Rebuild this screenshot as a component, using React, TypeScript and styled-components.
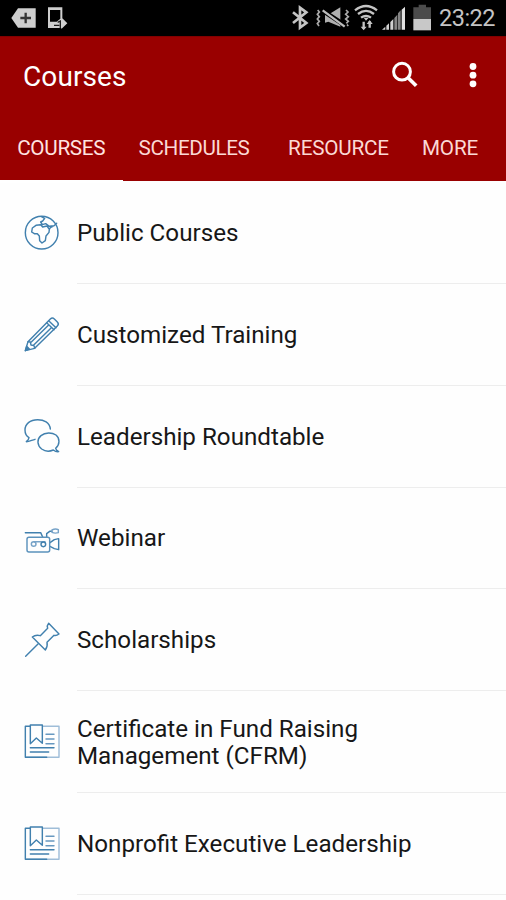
import React from 'react';
import styled, { createGlobalStyle } from 'styled-components';

const GlobalStyle = createGlobalStyle`
  * { box-sizing: border-box; }
  body { margin: 0; background: #fefefe; font-family: Roboto, sans-serif; overflow: hidden; }
`;

const Screen = styled.div`
  width: 506px;
  height: 900px;
  overflow: hidden;
  background: #fefefe;
`;

const StatusBar = styled.div`
  display: flex;
  justify-content: space-between;
  height: 36px;
  background: #000;
`;

const StatusIcons = styled.svg<{ $width: number }>`
  display: block;
  width: ${(p) => p.$width}px;
  height: 36px;
`;

const StatusRight = styled.div`
  display: flex;
  width: 226px;
`;

const Clock = styled.span`
  width: 67px;
  color: #c4c4c4;
  font-size: 23.5px;
  line-height: 37px;
  letter-spacing: -0.5px;
  white-space: nowrap;
`;

const Header = styled.header`
  height: 145.4px;
  background: #990000;
  border-top: 1px solid #820000;
`;

const Toolbar = styled.div`
  display: flex;
  align-items: center;
  height: 79px;
  padding-left: 23px;
`;

const Title = styled.h1`
  flex: 1;
  margin: 0;
  color: #fff;
  font-size: 28px;
  font-weight: 400;
  line-height: 32px;
  letter-spacing: 0.1px;
`;

const ToolbarIcons = styled.svg`
  width: 123px;
  height: 79px;
`;

const Tabs = styled.nav`
  display: grid;
  grid-template-columns: 122.5px 143px 146px 1fr;
  height: 65.4px;
`;

const Tab = styled.div<{ $active?: boolean; $align?: string; $inset?: number }>`
  display: flex;
  justify-content: ${(p) => p.$align ?? 'center'};
  padding-left: ${(p) => p.$inset ?? 0}px;
  border-bottom: ${(p) => (p.$active ? '3px solid #fff' : '0')};
  color: ${(p) => (p.$active ? '#ffe4e0' : '#fbd9d5')};
  font-size: 20.7px;
  line-height: 64px;
  white-space: nowrap;
`;

const TabLabel = styled.span<{ $spacing: number }>`
  letter-spacing: ${(p) => p.$spacing}px;
`;

const List = styled.main`
  padding-top: 0.8px;
`;

const Row = styled.div`
  display: flex;
  height: 101.8px;
  padding-left: 22px;
`;

const RowIcon = styled.svg`
  flex: none;
  width: 40px;
  height: 40px;
  margin: 30.2px 15px 0 0;
  fill: none;
  stroke: #4180ae;
  stroke-width: 4.3;
  stroke-linecap: round;
  stroke-linejoin: round;
`;

const RowBody = styled.div`
  display: flex;
  flex: 1;
  align-items: center;
  border-bottom: 1.5px solid #ededed;
  color: #171717;
  font-size: 24.2px;
  line-height: 27px;
`;

const RowLabel = styled.span`
  padding-top: 2px;
  white-space: pre-line;
`;

const Certificate = () => (
  <RowIcon viewBox="36 28 120 120">
    <g stroke="#9fbdd8">
      <path d="M98 44H147V137H50" />
      <path d="M108 68H132M108 82H132M108 96H132" stroke="#6798c0" />
    </g>
    <path d="M60 44H46V137H110M61 96V40H97V95L79 79L61 96M61 108H132M61 121H116" />
  </RowIcon>
);

const rows = [
  {
    label: 'Public Courses',
    icon: (
      <RowIcon viewBox="36 22 120 120">
        <circle cx="95" cy="84" r="49" />
        <path d="M94 36L104 41L98 49L92 52L97 60L107 57L118 65L132 63L140 56M130 64L121 69L118 74L111 64L98 67L92 60L78 62L67 70L65 82L73 87H82L88 94L89 108L96 115L106 108L108 94L117 83L118 74" />
      </RowIcon>
    ),
  },
  {
    label: 'Customized Training',
    icon: (
      <RowIcon viewBox="36 28 120 120">
        <path d="M46 138L54 111L121 43Q127 37 133 43L142 52Q148 58 142 64L74 131Z" />
        <path d="M54 111L61 112L63 121L72 123L74 131M110 54L132 75M116 48L138 69M64 112L116 61M72 120L124 69" />
        <path d="M46 138L50 125L58 133Z" fill="#4180ae" />
      </RowIcon>
    ),
  },
  {
    label: 'Leadership Roundtable',
    icon: (
      <RowIcon viewBox="36 27 120 120">
        <path d="M121 66C119 47 102 38 83 38C60 38 45 51 45 69C45 80 50 88 57 92C56 98 53 101 49 104C58 104 66 99 75 97" />
        <path d="M137 124C150 112 150 94 138 84C126 76 106 75 93 86C80 97 81 115 95 126C106 134 121 133 130 129C135 133 140 135 146 134C141 131 138 128 137 124Z" />
      </RowIcon>
    ),
  },
  {
    label: 'Webinar',
    icon: (
      <RowIcon viewBox="36 22 120 120">
        <path d="M46 66H92L98 79M110 79V69L119 62H126M120 96L133 87L146 84V117L133 114L120 107" />
        <path d="M57 80H113Q119 80 119 86V118Q119 124 113 124H57Q51 124 51 118V86Q51 80 57 80Z" stroke="#5b92bc" />
        <path d="M126 58Q136 53 145 57V66Q135 69 126 65ZM72 93H105" stroke="#77a3c8" />
        <circle cx="71" cy="100" r="7" stroke="#77a3c8" />
        <circle cx="100" cy="101" r="7" />
      </RowIcon>
    ),
  },
  {
    label: 'Scholarships',
    icon: (
      <RowIcon viewBox="36 29 120 120">
        <path d="M116 39L147 71Q139 77 132 75L111 96Q114 107 106 119L67 80Q77 72 91 76L113 54Q110 46 116 39Z" />
        <path d="M84 101L47 138" />
      </RowIcon>
    ),
  },
  { label: 'Certificate in Fund Raising\nManagement (CFRM)', icon: <Certificate /> },
  { label: 'Nonprofit Executive Leadership', icon: <Certificate /> },
];

export default function App() {
  return (
    <Screen>
      <GlobalStyle />
      <StatusBar>
        <StatusIcons $width={120} viewBox="0 0 360 108">
          <path d="M34 54L54 25H107V83H54Z" fill="#cecece" />
          <path d="M77 38V70M61 54H93" stroke="#343434" strokeWidth="7" />
          <path fillRule="evenodd" d="M144 22H187V55L202 70L184 87V84H144ZM150 30V65H170L181 56V30Z" fill="#cecece" />
          <path d="M162 76H178M173 67L181 63V85" fill="none" stroke="#1b1b1b" strokeWidth="4" />
        </StatusIcons>
        <StatusRight>
          <StatusIcons $width={159} viewBox="0 0 477 108">
            <path d="M39 37L79 69L60 83V23L79 37L39 69" fill="none" stroke="#c4c4c4" strokeWidth="8" />
            <g fill="none" stroke="#aaa" strokeWidth="5">
              <path d="M113 30L118 36L112 43L118 50L112 57L118 64L112 71L117 78M198 30L204 36L197 43L205 50L197 57L205 64L198 71L205 78" />
            </g>
            <path d="M135 39L147 43L181 22V80L145 65L135 68Z" fill="#b0b0b0" />
            <path d="M128 32L198 78" stroke="#000" strokeWidth="14" />
            <path d="M128 31L194 80" stroke="#bcbcbc" strokeWidth="7" />
            <g fill="none" stroke="#c4c4c4" strokeWidth="7">
              <path d="M225 31Q258 5 291 31M234 42Q258 23 282 42M243 53Q258 42 273 53" />
              <path d="M251 65V87M269 64V83" />
            </g>
            <path d="M251 53L258 62L266 53ZM242 80H260L251 91ZM260 72L269 60L278 72Z" fill="#c4c4c4" />
            <path d="M306 89L316 80V89ZM319 77L327 70V89H319ZM331 66L340 57V89H331Z" fill="#d0d0d0" />
            <path d="M343 54L352 44V89H343ZM354 40L362 31V89H354Z" fill="#858585" />
            <path d="M365 29L375 20V89H365Z" fill="#e0e0e0" />
            <path d="M416 14H438V22H453V57H400V22H416Z" fill="#4b4b4b" />
            <path d="M400 57H453V91H400Z" fill="#c8c8c8" />
          </StatusIcons>
          <Clock>23:22</Clock>
        </StatusRight>
      </StatusBar>
      <Header>
        <Toolbar>
          <Title>Courses</Title>
          <ToolbarIcons viewBox="0 0 123 79">
            <circle cx="19" cy="34.7" r="8.4" fill="none" stroke="#fff" strokeWidth="3" />
            <path d="M25.3 41L33.2 48.7" stroke="#fff" strokeWidth="3.7" />
            <circle cx="90" cy="29.5" r="3.4" fill="#fff" />
            <circle cx="90" cy="38.2" r="3.4" fill="#fff" />
            <circle cx="90" cy="46.8" r="3.4" fill="#fff" />
          </ToolbarIcons>
        </Toolbar>
        <Tabs>
          <Tab $active><TabLabel $spacing={-0.3}>COURSES</TabLabel></Tab>
          <Tab><TabLabel $spacing={-0.4}>SCHEDULES</TabLabel></Tab>
          <Tab><TabLabel $spacing={-0.2}>RESOURCE</TabLabel></Tab>
          <Tab $align="flex-start" $inset={10.5}><TabLabel $spacing={-0.2}>MORE</TabLabel></Tab>
        </Tabs>
      </Header>
      <List>
        {rows.map((r) => (
          <Row key={r.label}>
            {r.icon}
            <RowBody><RowLabel>{r.label}</RowLabel></RowBody>
          </Row>
        ))}
      </List>
    </Screen>
  );
}
